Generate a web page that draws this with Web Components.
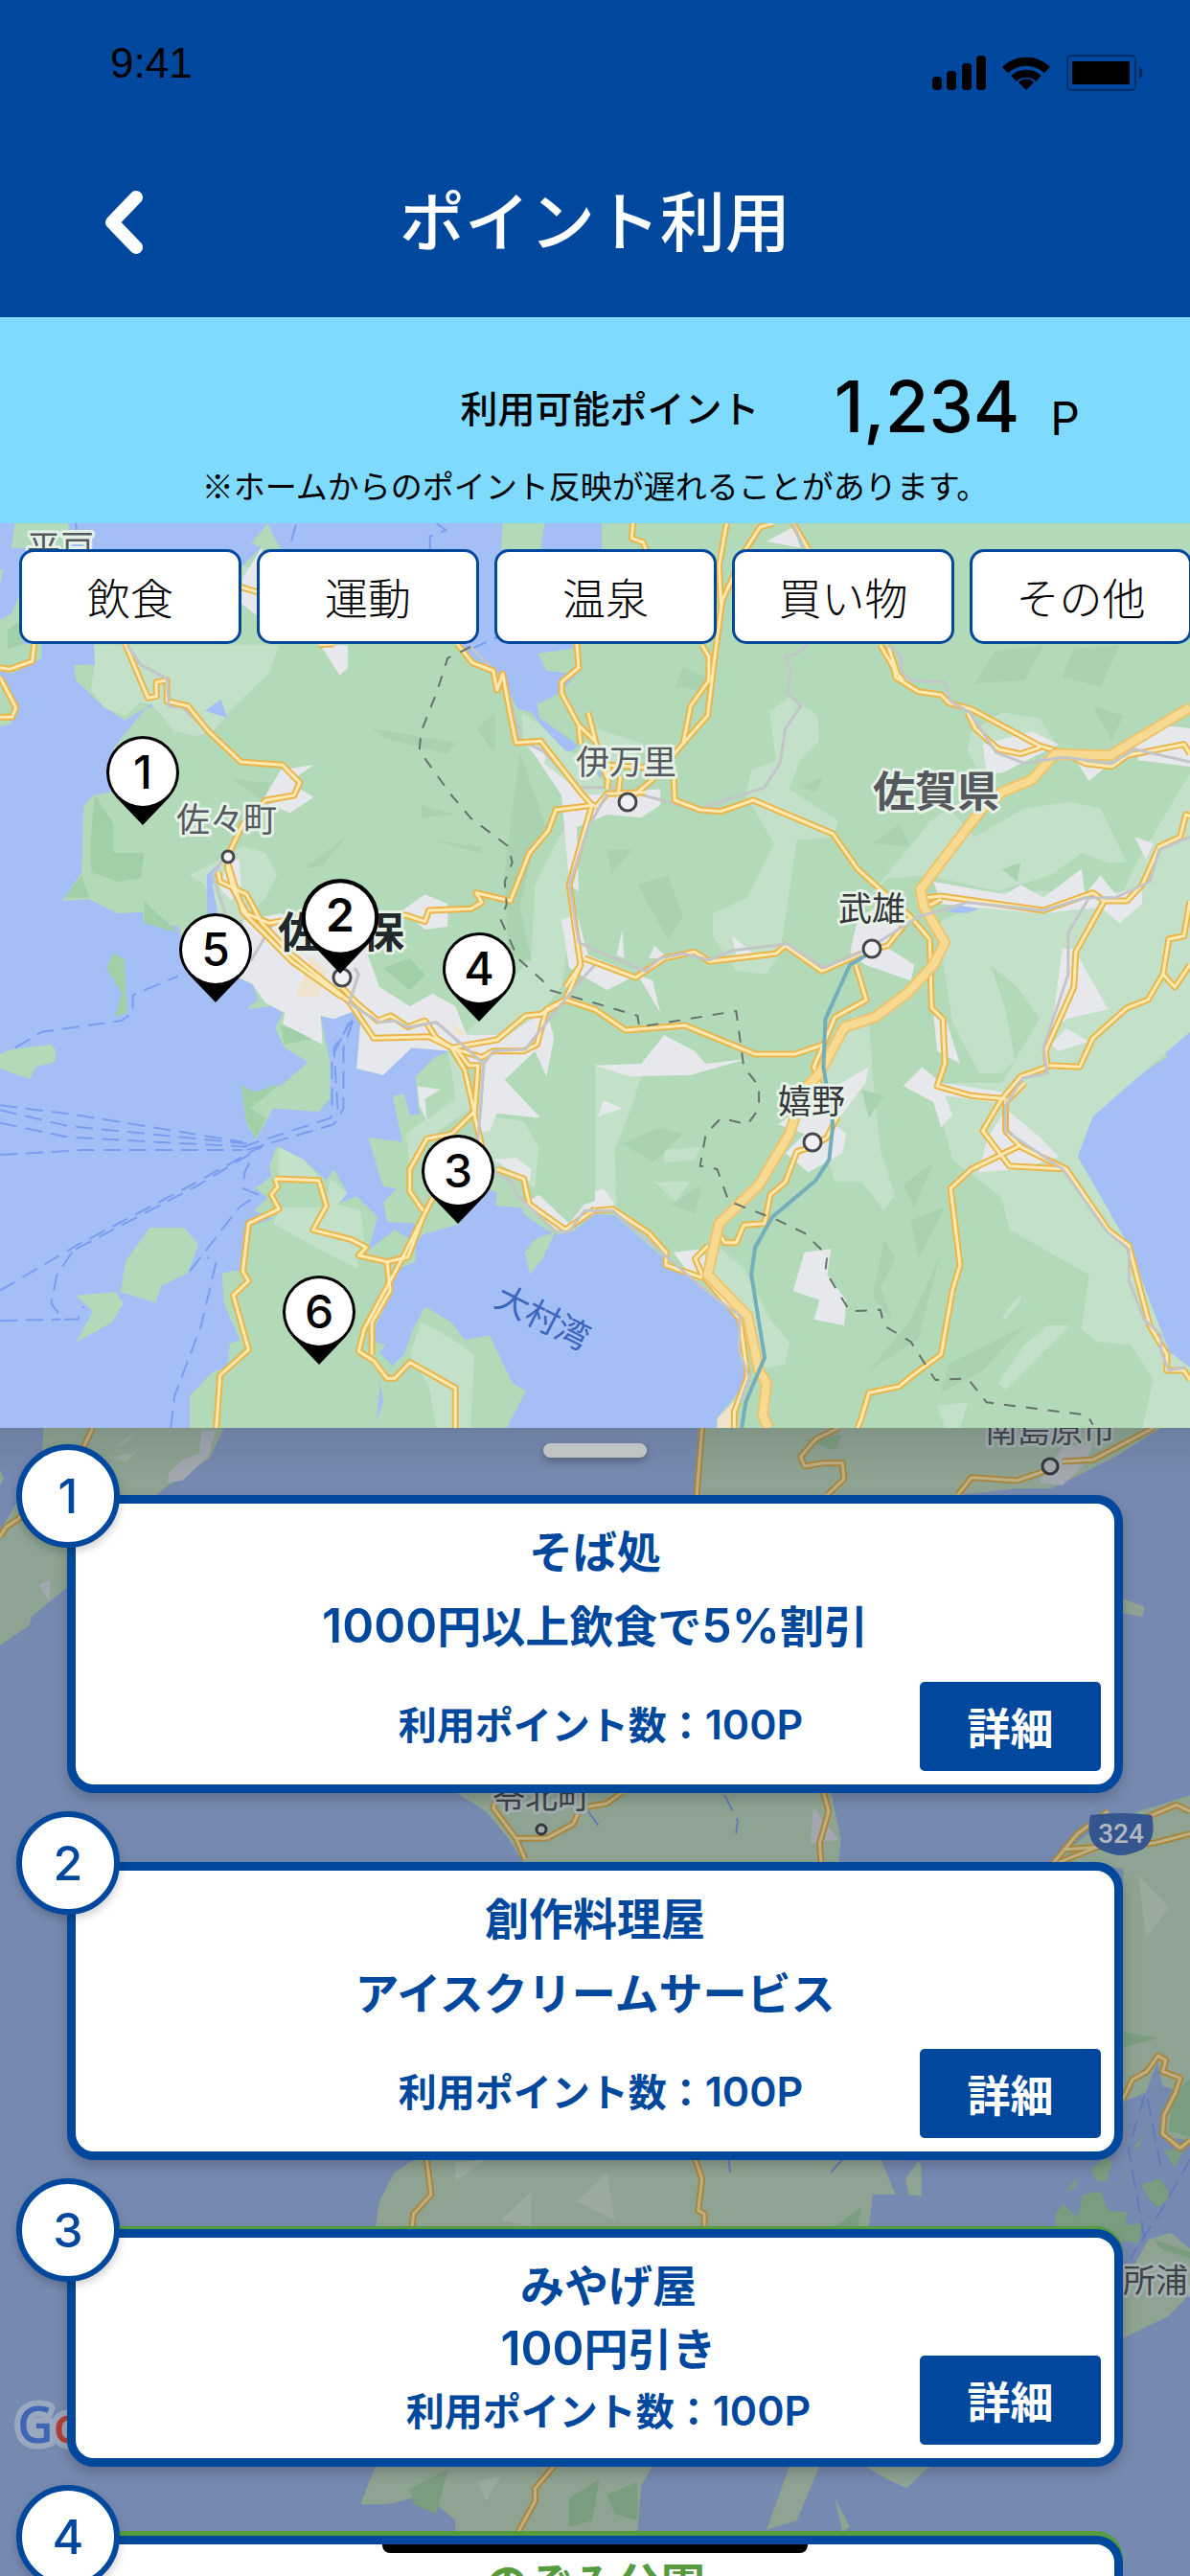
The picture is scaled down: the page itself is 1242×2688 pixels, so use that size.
<!DOCTYPE html>
<html lang="ja">
<head>
<meta charset="utf-8">
<meta name="viewport" content="width=device-width, initial-scale=1">
<title>ポイント利用</title>
<style>
  html, body {
    height: 100%;
    margin: 0;
  }

  body {
    --blue: #00489d;
    --green: #569c3f;
    --sky: #7fdaff;
    background: #ffffff;
    color: #000000;
    font-family: Inter, 'Noto Sans CJK JP', sans-serif;
  }

  /* Figures stand as tall as the kanji beside them */
  b {
    font-size: 50px;
    font-weight: inherit;
    line-height: 50px;
  }

  [slot=points] b {
    font-size: 43px;
  }
</style>
</head>
<body>

<point-app>
  <app-header time="9:41">ポイント利用</app-header>
  <point-balance label="利用可能ポイント" amount="1,234" unit="P">※ホームからのポイント反映が遅れることがあります。</point-balance>
  <area-map>
    <filter-chip slot="filters">飲食</filter-chip>
    <filter-chip slot="filters">運動</filter-chip>
    <filter-chip slot="filters">温泉</filter-chip>
    <filter-chip slot="filters">買い物</filter-chip>
    <filter-chip slot="filters">その他</filter-chip>
    <map-pin x="149" y="861">1</map-pin>
    <map-pin x="225" y="1046">5</map-pin>
    <map-pin x="500" y="1066">4</map-pin>
    <map-pin x="478" y="1277">3</map-pin>
    <map-pin x="333" y="1424">6</map-pin>
    <map-pin x="355" y="1016" selected>2</map-pin>
  </area-map>
  <coupon-sheet>
    <coupon-card number="1">
      <span slot="shop">そば処</span>
      <span slot="offer"><b>1000</b>円以上飲食で<b>5%</b>割引</span>
      <span slot="points">利用ポイント数：<b>100P</b></span>
    </coupon-card>
    <coupon-card number="2">
      <span slot="shop">創作料理屋</span>
      <span slot="offer">アイスクリームサービス</span>
      <span slot="points">利用ポイント数：<b>100P</b></span>
    </coupon-card>
    <coupon-card number="3" compact>
      <span slot="shop">みやげ屋</span>
      <span slot="offer"><b>100</b>円引き</span>
      <span slot="points">利用ポイント数：<b>100P</b></span>
    </coupon-card>
    <coupon-card number="4" compact park>
      <span slot="shop">のぞみ公園</span>
    </coupon-card>
  </coupon-sheet>
</point-app>

<script>
// Shared setup
// Opens a shadow root and fills it
class BaseElement extends HTMLElement {
  constructor( html ) {
    super();
    const template = document.createElement( 'template' );
    template.innerHTML = html;
    this.attachShadow( {mode: 'open'} );
    this.shadowRoot.appendChild( template.content.cloneNode( true ) );
  }
}

class PointApp extends BaseElement {
  constructor() {
    super( /* template */ `
      <style>
        :host {
          display: flex;
          flex-direction: column;
          height: 100%;
          overflow: hidden;
          position: relative;
        }

        div {
          background: #000000;
          border-radius: 0 0 8px 8px;
          bottom: 24px;
          height: 9px;
          left: 50%;
          margin-left: -222px;
          position: absolute;
          width: 444px;
        }
      </style>
      <slot></slot>
      <div part="home"></div>
    ` );
  }
}

class AppHeader extends BaseElement {
  constructor() {
    super( /* template */ `
      <style>
        :host {
          background: var( --blue );
          color: #ffffff;
          display: block;
          flex: none;
        }

        .status {
          align-items: flex-end;
          color: #000000;
          display: flex;
          font-family: 'Liberation Sans', sans-serif;
          font-size: 44px;
          height: 96px;
          justify-content: space-between;
          line-height: 60px;
          padding: 0 48px 36px 115px;
        }

        .status svg {
          display: block;
        }

        .bar {
          align-items: center;
          display: grid;
          grid-template-columns: 1fr auto 1fr;
          height: 199px;
        }

        button {
          background: none;
          border: none;
          height: 80px;
          justify-self: start;
          margin: 0 0 0 99px;
          padding: 0 10px;
        }

        button svg {
          display: block;
        }

        h1 {
          font-size: 68px;
          font-weight: 500;
          line-height: 80px;
          margin: 0;
        }
      </style>
      <div class="status">
        <time></time>
        <svg width="222" height="40" viewBox="972 56 222 40" aria-hidden="true">
          <rect x="973" y="80" width="10" height="14" rx="4"/>
          <rect x="988" y="74" width="10" height="20" rx="4"/>
          <rect x="1004" y="66" width="10" height="28" rx="4"/>
          <rect x="1019" y="58" width="10" height="36" rx="4"/>
          <g fill="none" stroke="#000">
            <path d="M1049 73a32 32 0 0 1 44 0" stroke-width="9"/>
            <path d="M1058 82a19 19 0 0 1 26 0" stroke-width="8"/>
          </g>
          <path d="M1071 94l-8-8a11 11 0 0 1 16 0z"/>
          <rect x="1114" y="58" width="71" height="36" rx="4" fill="none" stroke="#000" stroke-opacity=".35" stroke-width="2"/>
          <rect x="1119" y="64" width="60" height="24" rx="1"/>
          <path d="M1189 70a7 7 0 0 1 0 12z" opacity=".45"/>
        </svg>
      </div>
      <div class="bar">
        <button type="button" aria-label="戻る">
          <svg width="40" height="68" viewBox="0 0 40 68"><path d="M33 8L8 34L33 60" fill="none" stroke="#fff" stroke-width="14" stroke-linecap="round" stroke-linejoin="round"/></svg>
        </button>
        <h1><slot></slot></h1>
      </div>
    ` );
  }

  connectedCallback() {
    this.shadowRoot.querySelector( 'time' ).textContent = this.getAttribute( 'time' );
  }
}

class PointBalance extends BaseElement {
  constructor() {
    super( /* template */ `
      <style>
        :host {
          background: var( --sky );
          display: block;
          flex: none;
          padding: 48px 0 18px 0;
        }

        div {
          align-items: center;
          display: flex;
          height: 90px;
          justify-content: flex-end;
          line-height: 90px;
          padding: 0 115px 0 0;
        }

        span {
          font-family: 'Noto Sans CJK JP', sans-serif;
          font-size: 39px;
          font-weight: 500;
        }

        strong {
          font-size: 74px;
          font-weight: 500;
          margin: 0 32px 0 78px;
        }

        i {
          align-self: flex-end;
          font-size: 48px;
          font-style: normal;
          line-height: 64px;
        }

        p {
          font-family: 'Noto Sans CJK JP', sans-serif;
          font-size: 33px;
          line-height: 44px;
          margin: 15px 0 0 0;
          text-align: center;
        }
      </style>
      <div><span></span><strong></strong><i></i></div>
      <p><slot></slot></p>
    ` );
  }

  connectedCallback() {
    this.shadowRoot.querySelector( 'span' ).textContent = this.getAttribute( 'label' );
    this.shadowRoot.querySelector( 'strong' ).textContent = this.getAttribute( 'amount' );
    this.shadowRoot.querySelector( 'i' ).textContent = this.getAttribute( 'unit' );
  }
}

class FilterChip extends BaseElement {
  constructor() {
    super( /* template */ `
      <style>
        :host {
          display: block;
          flex: none;
        }

        button {
          background: #ffffff;
          border: solid 3px var( --blue );
          border-radius: 15px;
          box-sizing: border-box;
          color: #000000;
          font-family: 'Noto Sans CJK JP', sans-serif;
          font-size: 45px;
          font-weight: 300;
          height: 99px;
          line-height: 60px;
          padding: 0;
          width: 232px;
        }
      </style>
      <button type="button"><slot></slot></button>
    ` );
  }
}

// Pin whose tip stands on x, y
class MapPin extends BaseElement {
  constructor() {
    super( /* template */ `
      <style>
        :host {
          display: block;
          height: 94px;
          position: absolute;
          transform: translate( -50%, -100% );
          width: 78px;
        }

        :host( [selected] ) {
          height: 100px;
          width: 83px;
        }

        button {
          background: none;
          border: none;
          color: #000000;
          display: grid;
          font-family: inherit;
          font-size: 48px;
          font-weight: 500;
          grid-template: 100% / 100%;
          height: 100%;
          line-height: 78px;
          padding: 0;
          width: 100%;
        }

        :host( [selected] ) button {
          font-weight: 600;
        }

        :host( [selected] ) circle {
          r: 34px;
        }

        svg, span {
          grid-area: 1 / 1;
        }

        svg {
          display: block;
          height: 100%;
          width: 100%;
        }

        span {
          align-self: start;
        }
      </style>
      <button type="button">
        <svg viewBox="0 0 78 94"><path d="M39 94L11.500 65.200A38 38 0 1 1 66.500 65.200z"/><circle cx="39" cy="39" r="35" fill="#fff"/></svg>
        <span><slot></slot></span>
      </button>
    ` );
  }

  connectedCallback() {
    this.style.left = `${( this.getAttribute( 'x' ) / 1242 ) * 100}%`;
    this.style.top = `${( ( this.getAttribute( 'y' ) - 546 ) / 944 ) * 100}%`;
  }
}

const mapStyle = /* template */ `
  .base path {
    vector-effect: non-scaling-stroke;
  }

  .base .line {
    fill: none;
    stroke-linejoin: round;
  }

  svg text {
    fill: #55595d;
    font-family: 'Noto Sans CJK JP', sans-serif;
    font-size: 35px;
    paint-order: stroke;
    stroke: #e6f2e8;
    stroke-linejoin: round;
    stroke-width: 6px;
  }

  svg circle {
    fill: #f1f1f3;
    stroke: #45484b;
    stroke-width: 3px;
  }
`;

class AreaMap extends BaseElement {
  constructor() {
    super( /* template */ `
      <style>
        ${mapStyle}

        :host {
          aspect-ratio: 1242 / 944;
          background: #a3bff5;
          display: block;
          flex: none;
          overflow: hidden;
          position: relative;
        }

        svg {
          height: 100%;
          left: 0;
          position: absolute;
          top: 0;
          width: 100%;
        }

        nav {
          display: flex;
          gap: 16px;
          overflow: hidden;
          padding: 27px 0 0 20px;
          position: relative;
        }
      </style>
      <svg class="base" viewBox="0 48 3136 2832" preserveAspectRatio="none" aria-hidden="true">
        <defs>
          <g id="roads">
            <path d="M330 426L390 595L412 590L412 545L440 540L440 605L495 620L550 700L635 795L745 805L790 860L775 900L700 915L640 990L600 1090L600 1130L615 1195L650 1270L710 1300L800 1280"/>
            <path d="M575 1140L580 1170L650 1210L690 1300L770 1400L920 1545L985 1660L1130 1655L1190 1690L1310 1665L1385 1590L1425 1585L1490 1540L1530 1430"/>
            <path d="M600 1110L640 1265L770 1420L900 1530"/>
            <path d="M990 1280L1070 1275L1120 1295L1130 1260L1240 1255L1270 1235L1255 1205L1345 1230L1395 1080L1445 1010L1465 945L1568 930"/>
            <path d="M636 248L680 264M1205 426L1245 485L1300 510L1310 570L1325 520L1345 650L1360 735L1425 730L1530 890L1560 930"/>
            <path d="M840 428L880 425M1520 426L1525 500L1480 545L1480 580L1525 680L1530 740M1525 680L1568 730M1550 640L1580 780L1605 860"/>
            <path d="M1668 48L1665 95L1695 108L1702 130M2038 48L2003 60L1965 130L1903 290L1880 500L1865 650L1798 740L1720 850L1670 900M1915 48L1895 180L1900 300"/>
            <path d="M1850 430L1868 465L1868 540L1820 620L1800 740M1775 830L1778 915L1845 945L1900 950L1985 915L2195 1020L2260 1130L2400 1280L2340 1370L2298 1385"/>
            <path d="M1568 940L1600 895L1700 890M1605 800L1600 880M1635 840L1630 890M1560 930L1500 1180L1530 1430L1490 1500M1600 805L1730 815"/>
            <path d="M2090 48L2130 130M2320 430L2355 500L2360 530L2420 575L2480 585L2500 610L2560 630L2740 745L2800 765L2860 800L2930 810L2970 775L3120 740L3136 770M2340 430L2365 520L2380 540M2550 640L2570 690L2630 755L2690 770L2740 750"/>
            <path d="M2440 1220L2480 1215L2750 1260L2880 1205L2910 1230L2970 1230L3010 1180L3055 1060L3110 1030L3125 960L3136 965M2440 1250L2480 1225"/>
            <path d="M2400 1280L2450 1350L2455 1565L2485 1600L2490 1740L2470 1810L2560 1840L2650 1850"/>
            <path d="M2910 1230L2835 1390L2830 1500L2755 1700L2760 1750L2690 1780L2640 1850L2590 1950L2660 2060L2810 2070"/>
            <path d="M3136 1230L3120 1340L3080 1350L3065 1460L3025 1540L2970 1565L2880 1660L2845 1750L2765 1745M3065 1460L3096 1500L3136 1430"/>
            <path d="M2700 1800L2650 1860L2650 1950L2690 2000L2810 2070L2920 2260L2975 2310L3030 2560L3075 2650L3075 2700L3120 2700L3136 2730M2690 1995L2560 2070L2505 2130L2530 2370L2510 2450L2480 2650L2400 2720L2370 2750L2290 2770L2270 2850L2260 2880"/>
            <path d="M1490 1540L1568 1570L1648 1635L1805 1620L1990 1710L2095 1710L2170 1680M1540 1410L1675 1470L1750 1410L1830 1390L1870 1420L2045 1395L2070 1370L2165 1450L2270 1395"/>
            <path d="M2255 1430L2283 1540L2200 1595L2145 1750L2170 1840L2205 1910L2180 1970L2140 2000L2100 2015L2070 2110L2030 2150L2015 2240L1960 2245L1940 2300L1910 2300L1900 2280"/>
            <path d="M1865 2310L1832 2350L1850 2400L1950 2540L1970 2720L1935 2830L1935 2880M1568 2200L1615 2195L1710 2270L1755 2330L1755 2370L1850 2410"/>
            <path d="M1310 2070L1380 2100L1395 2180L1490 2260L1568 2195M1190 1690L1225 1760L1250 1890L1190 1960L1125 1975L1080 2070L1080 2140L1115 2200"/>
            <path d="M1200 1690L1235 1745L1260 1745L1250 1900L1270 2000M1140 2160L1060 2350L960 2570L945 2640L985 2670L1020 2725L1040 2725L1080 2675L1200 2755L1200 2880"/>
            <path d="M725 2100L840 2105L860 2185L825 2260L925 2290L965 2315L945 2340L1020 2360L1075 2345L1115 2220M1020 2360L1028 2450L980 2550L980 2650"/>
            <path d="M570 2880L580 2715L655 2635L615 2465L655 2420L640 2390L655 2240L735 2195L715 2150L732 2125L725 2100"/>
            <path d="M900 1500L940 1550L995 1605L1030 1590L1075 1625L1120 1605L1150 1660L1190 1690L1270 1720L1300 1700L1380 1700L1415 1680L1440 1570L1490 1540M0 500L25 505L85 480L90 426M0 530L42 625L32 655L0 655"/>
          </g>
        </defs>
        <g fill="#b2d9b8">
          <path d="M636 185L690 122L740 130L1200 426L1245 470L1310 510L1365 630L1400 640L1490 775L1525 745L1420 655L1415 615L1475 580L1520 520L1440 510L1418 455L1510 440L1586 130L1586 48L3136 48L3136 1638L3068 1690L3075 1720L2970 1800L2880 1905L2810 1880L2750 1815L2700 1795L2760 1870L2785 1930L2720 1980L2800 1962L2815 2010L2770 2030L2840 2030L2865 2085L2855 2120L2920 2255L2985 2320L3040 2550L3060 2570L3080 2640L3080 2680L3136 2690L3136 2880L1890 2880L1890 2850L1965 2740L1975 2710L1945 2640L1945 2540L1880 2470L1800 2395L1750 2350L1620 2215L1568 2210L1510 2265L1470 2275L1440 2260L1380 2210L1375 2190L1305 2185L1310 2145L1260 2115L1200 2220L1215 2240L1115 2275L1095 2300L1095 2360L1040 2385L1035 2450L990 2560L985 2610L1015 2620L1000 2645L1035 2685L1065 2650L1085 2580L1120 2500L1190 2550L1225 2605L1290 2590L1350 2740L1387 2765L1335 2880L500 2880L500 2780L560 2705L600 2690L605 2615L632 2605L590 2490L585 2395L640 2385L655 2250L720 2225L670 2200L705 2160L675 2130L715 2090L710 2060L728 2000L800 2040L860 2105L880 2070L915 2145L895 2175L940 2155L995 2220L970 2325L1040 2260L1080 2290L1095 2240L1020 2235L1010 2175L1045 2130L1010 2125L970 1970L1060 1985L1035 1840L1065 1835L1080 1900L1105 1900L1095 1780L1145 1720L1185 1700L1080 1690L1010 1775L940 1755L950 1610L935 1575L900 1565L880 1600L845 1590L870 1740L870 1850L840 1890L720 1880L675 1975L650 1930L635 1805L670 1830L740 1810L812 1735L750 1690L725 1630L745 1580L720 1560L650 1570L680 1540L665 1490L600 1460L480 1350L470 1310L380 1300L375 1265L310 1270L235 1225L165 1230L215 1140L220 935L245 900L290 890L300 750L385 625L330 665L275 625L200 540L195 492L255 490L248 426L636 400z"/>
          <path d="M40 48L180 48L185 130L30 125zM662 110L705 50L740 130L690 125zM1325 48L1435 48L1425 130L1320 130zM0 195L8 195L0 240zM0 350L30 330L60 250L60 426L110 426L110 470L30 520L0 510zM0 520L45 620L30 675L0 685z"/>
          <path d="M0 1710L30 1695L135 1680L148 1700L145 1735L95 1750L78 1788L0 1755zM395 2253L485 2253L523 2305L495 2395L425 2435L410 2488L318 2455L330 2360zM200 2465L305 2455L325 2490L295 2550L200 2612L245 2515zM1465 2265L1430 2350L1397 2400L1383 2330L1410 2290z"/>
        </g>
        <g fill="#c3e1c9">
          <path d="M248 430L735 430L710 515L610 630L570 690L520 715L460 700L400 615L370 610L330 650L275 625L240 570L250 490zM500 1150L640 1060L700 1080L730 1150L700 1220L640 1290L560 1290L540 1180zM1375 640L1425 680L1490 760L1560 780L1600 900L1540 980L1500 870L1380 740z"/>
          <path d="M1410 1180L1460 1060L1500 980L1510 1250L1480 1500L1440 1560L1370 1640L1300 1670L1220 1650L1300 1560L1400 1400z"/>
          <path d="M2028 640L2080 590L2155 650L2158 730L2108 790L2080 880L2208 980L2198 1030L2100 1040L2080 1200L2055 1400L2018 1460L1940 1450L1878 1340L1878 1270L1970 1220L2040 1050L1965 900L1980 820L2045 790zM1568 690L1700 740L1600 840z"/>
          <path d="M2453 980L2500 940L2570 1030L2700 940L2820 920L2900 940L2970 1110L2920 1110L2850 1080L2770 1150L2630 1200L2440 1150L2340 1160L2260 1250L2200 1330L2300 1200zM2560 700L2640 640L2740 660L2790 750L2640 800L2590 850L2550 760z"/>
          <path d="M3136 830L3000 1100L2960 1200L2640 1200L2470 1300L2485 1420L2510 1610L2580 1770L2640 1770L2675 1730L2650 1570L2610 1430L2680 1500L2740 1600L2640 1800L2500 1800L2480 1900L2510 2040L2640 2160L2660 2260L2870 2400L2850 2570L2890 2610L2980 2620L3040 2730L3010 2880L3136 2880L3136 2690L3080 2640L2975 2310L2840 2030L2880 1905L3136 1640z"/>
          <path d="M2250 1590L2170 1740L2120 1810L2150 1920L2200 2110L2270 2110L2330 2200L2358 2150L2320 2010L2300 1780L2290 1600zM1568 1740L1690 1780L1660 1890L1620 2010L1625 2190L1568 2190zM1890 2310L1960 2380L2030 2540L2080 2610L2070 2680L1990 2700L1960 2550L1870 2420z"/>
          <path d="M735 2000L800 2040L850 2110L735 2110zM870 2100L915 2145L890 2180L950 2200L960 2290L940 2380L840 2320L720 2240L740 2190L860 2190zM1110 2550L1190 2600L1250 2650L1240 2880L1150 2880L1130 2750L1080 2650zM1180 1700L1240 1800L1240 1880L1110 1990L1080 2060L1070 1960L1200 1850L1190 1760zM1260 1900L1380 1920L1420 2000L1410 2130L1280 2040z"/>
          <path d="M640 180L680 200L680 330L636 300zM2000 2480"/>
          <path d="M2700 2620L2760 2560L2820 2560L2650 2760L2630 2740zM2640 2530L2690 2460L2690 2480L2650 2540zM2470 2810L2550 2800L2530 2880L2490 2880zM1750 2010L1850 2000L1830 2040L1750 2050zM1725 2110L1820 2110L1780 2170z"/>
        </g>
        <g fill="#a9d3b0">
          <path d="M980 690L1200 735L1180 770L1010 720zM1305 640L1305 770L1255 690zM800 1130L920 1020L850 1120zM1110 930L1200 960L1110 970zM1140 1040L1270 1060L1265 1080zM615 850L710 860L695 920zM1370 770L1440 1000L1400 1090L1370 1250L1400 1420L1340 1400L1330 1130z"/>
          <path d="M1800 500L1870 530L1840 570L1780 560zM2110 875L2170 840L2150 890zM2370 990L2400 1060L2300 1050zM1600 1070L1665 1070L1610 1150zM1680 1180L1760 1150L1800 1280L1760 1350zM2620 450L2750 430L2700 540L2570 550zM2830 440L2950 430L2900 560L2800 530zM2880 620L2960 650L2930 730zM2640 1130L2690 1110L2680 1170z"/>
          <path d="M1640 1990L1740 1940L1800 1960L1720 2050zM1770 2180L1850 2120L1830 2210zM2270 1820L2330 1840L2290 1910zM2380 2120L2460 2050L2410 2190zM2330 2290L2360 2350L2320 2440L2350 2540L2300 2470zM2400 2230L2490 2190L2420 2350zM2290 2700L2420 2600L2480 2330L2400 2540zM2500 2680L2700 2560L2590 2700L2480 2770z"/>
        </g>
        <g fill="#a0cfa8">
          <path d="M250 900L300 990L300 1080L380 1080L370 1160L310 1170L240 1140L240 1020zM170 1220L215 1150L235 1220zM380 1230L470 1330L380 1300zM20 380L60 350L60 426L20 440zM280 1440L300 1395L328 1412L335 1580L302 1592L322 1520zM635 1805L670 1830L740 1800L660 1880L700 1910L675 1975L650 1920zM740 1620L830 1660L750 1680zM1010 1440L1080 1410L1120 1460L1080 1510z"/>
        </g>
        <g fill="#e7e8ec">
          <path d="M690 122L640 220L636 300L680 340L690 150zM845 430L917 430L917 500L895 525zM740 820L825 805L785 840L790 880L827 905L765 955L690 920zM1390 740L1440 760L1435 800L1540 900L1740 880L1740 930L1690 970L1600 960L1520 1000L1525 1200L1500 1180L1480 900zM600 1100L630 1100L635 1180L610 1230L580 1190z"/>
          <path d="M640 1290L740 1270L800 1300L960 1370L1000 1500L1080 1560L1140 1520L1200 1560L1230 1650L1340 1650L1440 1570L1460 1660L1440 1780L1410 1700L1330 1790L1425 1910L1310 1895L1290 1950L1255 1960L1270 1760L1185 1700L1085 1690L1010 1775L940 1755L950 1610L935 1575L880 1600L845 1590L850 1680L745 1615L750 1580L700 1550L665 1490L630 1470zM1060 1260L1120 1210L1180 1240L1180 1310L1120 1320zM1100 1810L1160 1820L1120 1850L1125 1920L1105 1870z"/>
          <path d="M1480 1290L1520 1270L1550 1400L1720 1480L1740 1580L1680 1460L1600 1510L1500 1440zM1625 1400L1640 1320L1645 1410zM1930 1340L1990 1400L1940 1400zM1710 1410L1725 1370L1760 1410zM2240 1390L2260 1290L2320 1240L2400 1270L2330 1370L2410 1430L2400 1480L2280 1430zM2460 1170L2650 1210L2690 1180L2750 1220L2850 1130L2860 1210L2900 1150L2940 1210L3010 1180L3010 1240L2950 1300L2900 1250L2740 1270L2480 1240z"/>
          <path d="M2020 105L2090 60L2110 125zM3060 680L3136 690L3136 810L3000 790L2990 740zM2590 740L2720 700L2790 740L2640 830L2600 830zM2840 800L2920 805L2870 855zM2990 1030L3040 1050L3020 1100zM2800 1380L2830 1380L2920 1570L2810 1600L2770 1640zM2770 1680L2810 1630L2870 1670L2790 1700zM2380 1810L2430 1750L2480 1800L2650 1830L2620 1860L2490 1840L2510 1900L2480 1940L2460 1860z"/>
          <path d="M2460 1590L2490 1590L2530 1740L2470 1700zM2580 2080L2600 1980L2650 1880L2740 1970L2790 2030L2690 2070zM1690 1740L1750 1650L1830 1700L1860 1740L1970 1725L1820 1775L1660 1780L1568 1745zM1580 1890L1590 1855L1640 1880L1575 1905zM2160 1840L2290 1750L2280 1800L2200 1930L2230 1960L2220 2020L2130 2080L2070 2020L2120 1960L2050 1930zM2120 2330L2190 2320L2180 2400L2230 2480L2225 2560L2145 2540L2160 2480L2090 2450zM1775 2330L1850 2320L1880 2400L1830 2420zM1300 2040L1360 2035L1400 2070L1395 2110zM1380 2180L1420 2150L1500 2240L1540 2180L1568 2170L1568 2210L1470 2270zM1568 2140L1590 2130L1620 2180L1568 2200z"/>
        </g>
        <g fill="#a3bff5">
          <path d="M540 635L582 600L600 658zM385 625L400 612L400 625zM545 1150L585 1105L560 1180L575 1280L545 1270zM2495 1265L2530 1245L2580 1255L2550 1268zM992 2860L1002 2740L1010 2800zM1568 820L1590 830L1580 845z"/>
        </g>
        <path fill="#efe3cd" d="M820 1400L860 1450L840 1530L780 1530zM1190 1610L1230 1650L1200 1650zM1890 2850L1940 2790L1930 2880L1890 2880z"/>
        <g class="line" stroke="#7b9df0" stroke-width="2" stroke-dasharray="18 9">
          <path d="M0 1870L200 1900L640 1985M0 1885L180 1935L650 1990M0 1925L180 1970L650 2000M0 2025L220 2010L640 2010"/>
          <path d="M640 2000L870 1910L890 1880L880 1690L930 1600M650 2010L880 1930L905 1880L905 1690L935 1590M875 1870L875 1720L920 1610"/>
          <path d="M0 2450L200 2310L520 2110L700 1990M200 2320L520 2122L690 2000M190 2330L150 2400L135 2490L165 2540L205 2540L220 2500M0 2545L160 2540M450 2880L460 2780L530 2560L570 2360L545 2345M500 2390L630 2190L680 2150L640 2130L645 2080L665 2030M40 1690L110 1640L320 1605L350 1580L350 1525L470 1465"/>
          <path d="M780 52L765 115M1150 48L1175 70L1133 90L1133 130M200 48L205 120M1240 442L1310 405"/>
        </g>
        <path class="line" stroke="#c4c5c8" stroke-width="3" d="M335 430L370 490L440 535L445 620L480 625L640 800L740 805L785 845L780 900L700 925L610 1060L560 1150L600 1290M660 1420L720 1300M935 1440L945 1460L920 1550L1000 1610L1040 1605L1075 1625L1150 1610L1275 1740L1260 1980M1275 1740L1300 1700L1385 1695L1440 1610L1530 1480L1568 1430M1240 435L1330 540L1375 730L1430 760L1520 875L1620 875L1835 945L2015 875L2055 800L2070 690L2110 620L2075 580L2085 510L2070 465L2100 455L2130 425"/>
        <use href="#roads" class="line" stroke="#ebb549" stroke-width="7"/>
        <use href="#roads" class="line" stroke="#fdeab3" stroke-width="3"/>
        <path class="line" stroke="#efc36b" stroke-width="12" d="M3136 625L2925 775L2780 770L2720 850L2640 890L2590 940L2550 1000L2425 1195L2435 1250L2490 1360L2460 1430L2390 1520L2305 1595L2225 1625L2160 1770L2120 1820L2080 1960L2000 2120L1895 2240L1865 2400L1970 2530L2000 2700L2020 2740L2010 2840L2025 2880"/>
        <path class="line" stroke="#f7da92" stroke-width="8" d="M3136 625L2925 775L2780 770L2720 850L2640 890L2590 940L2550 1000L2425 1195L2435 1250L2490 1360L2460 1430L2390 1520L2305 1595L2225 1625L2160 1770L2120 1820L2080 1960L2000 2120L1895 2240L1865 2400L1970 2530L2000 2700L2020 2740L2010 2840L2025 2880"/>
        <path class="line" stroke="#c4c5c8" stroke-width="3" d="M335 430L370 490L440 535L445 620M935 1440L945 1460L920 1550L1000 1610L1040 1605L1075 1625L1150 1610L1275 1740L1260 1980M1275 1740L1300 1700L1385 1695L1440 1610L1530 1480M1600 895L1550 1000L1500 1180L1525 1360L1600 1400L1700 1450L1740 1410L1800 1395L1870 1415L1930 1385L2075 1365L2170 1440L2280 1385L2420 1280L2550 1235L2750 1260L2860 1220L2940 1220L3030 1170L3055 1070L3136 1030M2340 430L2375 465L2375 510L2400 540L2490 545L2505 605L2555 640L2625 765L2700 800L2800 780L2930 800L2990 755L3136 795M2090 48L2120 130M2870 1220L2815 1330L2815 1460L2750 1690L2760 1770L2695 1785L2650 1870L2650 1950L2800 2070L2920 2270L2975 2320L2975 2420L3015 2540L3060 2590L3060 2640L3080 2700L3125 2690M1290 2070L1350 2110L1360 2150L1465 2265L1500 2265L1540 2200L1615 2200L1860 2450L1950 2530L1948 2640L1975 2720L1950 2800"/>
        <path class="line" stroke="#73aebb" stroke-width="4" d="M2298 1390L2240 1430L2175 1600L2170 1750L2195 1930L2185 2040L2150 2105L2035 2220L1990 2315L1980 2400L2015 2660L1965 2800L1955 2880"/>
        <path class="line" stroke="#65736c" stroke-width="2" stroke-dasharray="12 11" d="M1240 435L1180 470L1150 580L1110 700L1105 760L1190 900L1240 970L1340 1060L1350 1110L1330 1170L1335 1240L1320 1290L1365 1410L1430 1480L1450 1510L1568 1550L1680 1590L1685 1625L1940 1575L1960 1750L2000 1810L2000 1880L1970 1930L1900 1910L1860 1960L1845 2060L1890 2070L1920 2170L2050 2230L2120 2270L2180 2340L2175 2390L2240 2515L2320 2510L2330 2560L2400 2610L2465 2730L2550 2725L2600 2800L2865 2840L2880 2870"/>
      </svg>
      <svg viewBox="0 546 1242 944">
        <circle cx="238" cy="894" r="6" stroke="#777"/>
        <circle cx="357" cy="1020" r="9"/>
        <circle cx="655" cy="837" r="9"/>
        <circle cx="910" cy="990" r="9"/>
        <circle cx="848" cy="1192" r="9"/>
        <text x="28" y="584">平戸</text>
        <text x="184" y="868">佐々町</text>
        <text x="290" y="989" style="font-size: 44px; font-weight: 700; fill: #22272b">佐世保</text>
        <text x="601" y="808">伊万里</text>
        <text x="911" y="842" style="font-size: 44px; font-weight: 700">佐賀県</text>
        <text x="875" y="961" style="fill: #33373a">武雄</text>
        <text x="812" y="1162" style="fill: #33373a">嬉野</text>
        <text x="514" y="1362" transform="rotate(27 514 1362)" style="fill: #3c66bd; stroke: none">大村湾</text>
      </svg>
      <nav aria-label="カテゴリ"><slot name="filters"></slot></nav>
      <slot></slot>
    ` );
  }
}

class CouponSheet extends BaseElement {
  constructor() {
    super( /* template */ `
      <style>
        ${mapStyle}

        :host {
          background: #7689b0;
          box-sizing: border-box;
          display: flex;
          flex: 1;
          flex-direction: column;
          gap: 72px;
          min-height: 0;
          overflow: hidden;
          padding: 16px 70px 0 70px;
          position: relative;
        }

        svg {
          height: 1199px;
          left: 0;
          position: absolute;
          top: 0;
          width: 100%;
        }

        svg text {
          fill: #3e4245;
          font-size: 34px;
          stroke: #a3aeb0;
        }

        svg circle {
          fill: #a5a8ab;
          stroke: #33363a;
        }

        .shade {
          background: linear-gradient( rgba( 60, 70, 80, 0.16 ), rgba( 60, 70, 80, 0 ) );
          height: 50px;
          left: 0;
          position: absolute;
          right: 0;
          top: 0;
        }

        .handle {
          align-self: center;
          background: #c1c4c4;
          border: none;
          border-radius: 8px;
          box-shadow: 0 4px 8px rgba( 0, 0, 0, 0.25 );
          flex: none;
          height: 15px;
          margin: 0 0 -33px 0;
          padding: 0;
          position: relative;
          width: 108px;
        }
      </style>
      <svg class="base" viewBox="0 0 1568 3597" preserveAspectRatio="none" aria-hidden="true">
        <defs>
          <g id="roads">
            <path d="M122 0L110 60M0 340L8 310L24 285L30 270M925 0L918 210M1105 0L1075 35L1055 90L1060 120L1085 110L1110 110L1112 160L1090 210M1520 0L1440 100L1400 105M1395 120L1340 165L1280 155L1262 210"/>
            <path d="M720 1285L680 1285L650 1190L655 1150M720 1285L755 1240L765 1190L800 1175L820 1140M680 1285L692 1350M1085 1140L1092 1200L1080 1300L1082 1360M1385 1370L1420 1270L1460 1200M1400 1320L1520 1300L1568 1270M1395 1360L1490 1270M1490 1240L1550 1180L1568 1200"/>
            <path d="M1480 2100L1492 2040L1511 2015L1526 1965L1536 1980L1532 2015L1555 2035L1549 2080L1534 2150L1532 2210L1555 2255L1568 2230M562 2284L568 2400L545 2460L543 2500M915 2284L925 2350L920 2450L928 2460L928 2500M730 3250L705 3320L705 3360L682 3460"/>
          </g>
        </defs>
        <g fill="#8ea391">
          <path d="M57 0L295 0L276 95L223 178L206 210L206 450L88 500L42 590L38 620L0 680L0 320L21 240L25 190L55 130zM920 0L1530 0L1470 90L1445 120L1385 190L1340 190L1262 210L915 210zM1480 535L1508 560L1505 592L1480 580z"/>
          <path d="M600 1140L640 1200L668 1280L690 1360L1105 1360L1108 1290L1095 1140zM1568 1150L1500 1200L1440 1260L1390 1350L1480 1380L1480 2110L1510 2080L1519 2020L1525 1985L1532 2060L1545 2070L1534 2150L1534 2220L1568 2230zM550 2284L520 2330L500 2420L495 2500L1145 2500L1150 2400L1180 2400L1160 2284z"/>
          <path d="M495 3250L475 3370L510 3370L560 3340L600 3420L600 3460L840 3460L845 3310L860 3250zM1193 2350L1210 2295L1214 2310L1214 2405L1197 2400zM1496 2615L1513 2540L1543 2520L1568 2570L1568 2710L1540 2780L1480 2850L1480 2670zM1040 3250L1080 3250L1050 3420L1010 3450zM1140 3250L1230 3250L1220 3260L1195 3320L1160 3280zM1100 3350L1120 3440L1110 3455z"/>
          <path d="M0 130L5 160L0 180z"/>
        </g>
        <g fill="#7a9c7f">
          <path d="M1060 40L1110 20L1100 70zM1480 1890L1500 1900L1525 1910L1480 1940zM1391 2460L1400 2430L1420 2470L1427 2400L1450 2390L1460 2450L1484 2455L1484 2495L1505 2490L1500 2550L1475 2545L1450 2500L1391 2500zM1437 2320L1458 2280L1465 2300L1458 2360L1444 2355zM1404 2395L1418 2345L1418 2375zM1505 2370L1528 2350L1543 2405L1526 2440L1513 2410zM1534 2260L1560 2260L1547 2315zM1491 2260L1511 2205L1500 2250zM1100 2500L1135 2440L1130 2500zM540 3320L590 3260L575 3400L545 3370zM750 3350L790 3290L780 3420L750 3440zM800 3340L840 3300L840 3420L810 3400zM1545 2080L1568 2040L1568 2220L1540 2200zM1520 2540L1568 2580L1568 2600L1530 2570z"/>
        </g>
        <g fill="#9aab9c">
          <path d="M150 60L180 10L165 50zM150 90L180 75L165 110zM600 2300L640 2290L600 2360zM660 2480L700 2390L700 2500zM760 2420L800 2330L810 2480zM630 3300L660 3280L640 3360zM1500 1400L1540 1500L1510 1600z"/>
        </g>
        <path fill="#a3a8b0" d="M265 10L284 10L274 90L240 165L221 170L223 140L240 100L263 80zM51 490L67 475L65 545zM1400 60L1440 50L1430 110L1400 180L1370 170zM1072 1190L1105 1290L1068 1300z"/>
        <g class="line" stroke="#6479b8" stroke-width="2" stroke-dasharray="18 9">
          <path d="M775 1200L790 1250M955 1150L972 1230L970 1270M1508 2090L1487 2260L1510 2560M1512 2100L1530 2320M1568 2290L1530 2450L1489 2600M1095 2330L1110 2290M960 2284L962 2330"/>
        </g>
        <use href="#roads" class="line" stroke="#a8863d" stroke-width="7"/>
        <use href="#roads" class="line" stroke="#beaf83" stroke-width="3"/>
      </svg>
      <svg viewBox="0 1490 1242 1199" preserveAspectRatio="xMidYMin slice">
        <circle cx="1096" cy="1530" r="8"/>
        <circle cx="565" cy="1909" r="5"/>
        <text x="1028" y="1505">南島原市</text>
        <text x="514" y="1887">苓北町</text>
        <text x="1138" y="2392">御所浦島</text>
        <path d="M1138 1894Q1170 1890 1202 1894Q1208 1920 1192 1930Q1178 1936 1170 1936Q1162 1936 1148 1930Q1132 1920 1138 1894z" fill="#35558f"/>
        <text x="1170" y="1923" text-anchor="middle" style="fill: #b2b8c0; font-family: Roboto, sans-serif; font-size: 28px; font-weight: 500; stroke: none">324</text>
        <text x="18" y="2549" style="fill: #3f66b5; font-family: 'Open Sans', sans-serif; font-size: 52px; font-weight: 600; stroke: #9aa8bf; stroke-width: 12px">G<tspan fill="#b53f35">o</tspan></text>
      </svg>
      <div class="shade"></div>
      <button class="handle" type="button" aria-label="一覧を広げる"></button>
      <slot></slot>
    ` );
  }
}

class CouponCard extends BaseElement {
  constructor() {
    super( /* template */ `
      <style>
        :host {
          color: var( --blue );
          display: block;
          flex: none;
          font-weight: 600;
          position: relative;
        }

        article {
          background: #ffffff;
          border: solid 9px var( --blue );
          border-radius: 28px;
          box-shadow: 0 6px 14px rgba( 0, 0, 0, 0.2 );
          display: grid;
        }

        :host( [compact] ) article {
          box-shadow: 0 -3px 0 var( --green ), 0 6px 14px rgba( 0, 0, 0, 0.2 );
        }

        :host( [park] ) article {
          box-shadow: 0 -5px 0 var( --green );
          color: var( --green );
        }

        .text, button {
          grid-area: 1 / 1;
        }

        .text {
          padding: 17px 0 28px 0;
          text-align: center;
        }

        :host( [compact] ) .text {
          padding: 17px 0 15px 28px;
        }

        :host( [park] ) .text {
          padding: 8px 0 0 0;
        }

        h2, p {
          font-size: 46px;
          font-weight: inherit;
          height: 66px;
          line-height: 66px;
          margin: 0;
        }

        .offer {
          margin: 12px 0 38px 0;
        }

        :host( [compact] ) .offer {
          margin: 0;
        }

        .points {
          font-size: 40px;
          padding: 0 0 0 12px;
        }

        :host( [compact] ) .points {
          padding: 0;
        }

        button {
          align-self: end;
          background: var( --blue );
          border: none;
          border-radius: 5px;
          color: #ffffff;
          font-family: 'Noto Sans CJK JP', sans-serif;
          font-size: 45px;
          font-weight: 700;
          height: 93px;
          justify-self: end;
          line-height: 60px;
          margin: 0 14px 14px 0;
          padding: 0;
          width: 189px;
        }

        .badge {
          align-items: center;
          background: #ffffff;
          border: solid 6px var( --blue );
          border-radius: 50%;
          box-shadow: 0 4px 10px rgba( 0, 0, 0, 0.2 );
          box-sizing: border-box;
          display: flex;
          font-size: 50px;
          font-weight: 500;
          height: 108px;
          justify-content: center;
          left: -53px;
          position: absolute;
          top: -53px;
          width: 108px;
        }
      </style>
      <article>
        <div class="text">
          <h2><slot name="shop"></slot></h2>
          <p class="offer"><slot name="offer"></slot></p>
          <p class="points"><slot name="points"></slot></p>
        </div>
        <button type="button">詳細</button>
      </article>
      <div class="badge"></div>
    ` );
  }

  connectedCallback() {
    this.shadowRoot.querySelector( '.badge' ).textContent = this.getAttribute( 'number' );

    // Parks list a name only
    if( this.hasAttribute( 'park' ) ) {
      this.shadowRoot.querySelector( 'button' ).remove();
    }
  }
}

window.customElements.define( 'point-app', PointApp );
window.customElements.define( 'app-header', AppHeader );
window.customElements.define( 'point-balance', PointBalance );
window.customElements.define( 'filter-chip', FilterChip );
window.customElements.define( 'map-pin', MapPin );
window.customElements.define( 'area-map', AreaMap );
window.customElements.define( 'coupon-sheet', CouponSheet );
window.customElements.define( 'coupon-card', CouponCard );
</script>
</body>
</html>
